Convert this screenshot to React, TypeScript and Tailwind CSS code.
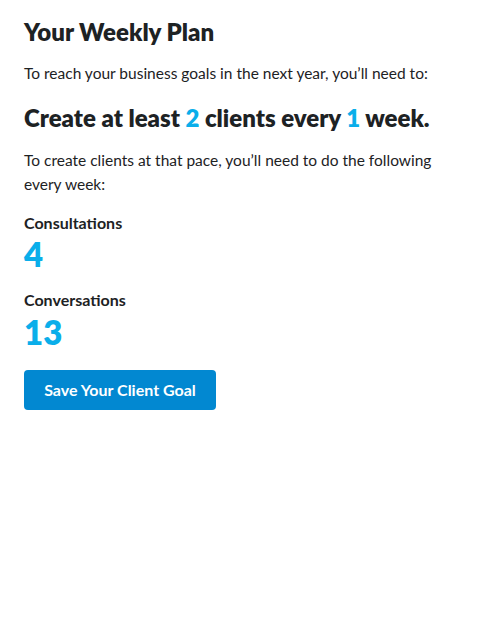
import React from "react";

const BLUE = "text-[#0aaeea]";

export default function App() {
  return (
    <div className="w-[485px] h-[624px] bg-white rounded-b-[6px] overflow-hidden" style={{ fontFamily: "Lato, 'Open Sans', sans-serif" }}>
      <div className="pl-6 pr-[40px] pt-[17px] text-[#1d2224]">
        <h1 className="text-[24px] font-extrabold leading-[30px]">Your Weekly Plan</h1>
        <p className="mt-[14px] text-[15.5px] leading-[24px]">To reach your business goals in the next year, you’ll need to:</p>
        <h2 className="mt-[18px] text-[24px] font-extrabold leading-[30px] whitespace-nowrap">
          Create at least <span className={BLUE}>2</span> clients every <span className={BLUE}>1</span> week.
        </h2>
        <p className="mt-[15px] text-[15.5px] leading-[24px]">To create clients at that pace, you’ll need to do the following every week:</p>
        <div className="mt-[17px] text-[16px] font-bold leading-[20px]">Consultations</div>
        <div className={`mt-[3px] text-[33px] font-extrabold leading-[36px] ${BLUE}`}>4</div>
        <div className="mt-[18px] text-[16px] font-bold leading-[20px]">Conversations</div>
        <div className={`mt-[4px] text-[33px] font-extrabold leading-[36px] ${BLUE}`}>13</div>
        <button className="mt-[20px] h-[40px] w-[192px] rounded-[4px] bg-[#0288d1] text-white text-[16px] font-bold">Save Your Client Goal</button>
      </div>
    </div>
  );
}
